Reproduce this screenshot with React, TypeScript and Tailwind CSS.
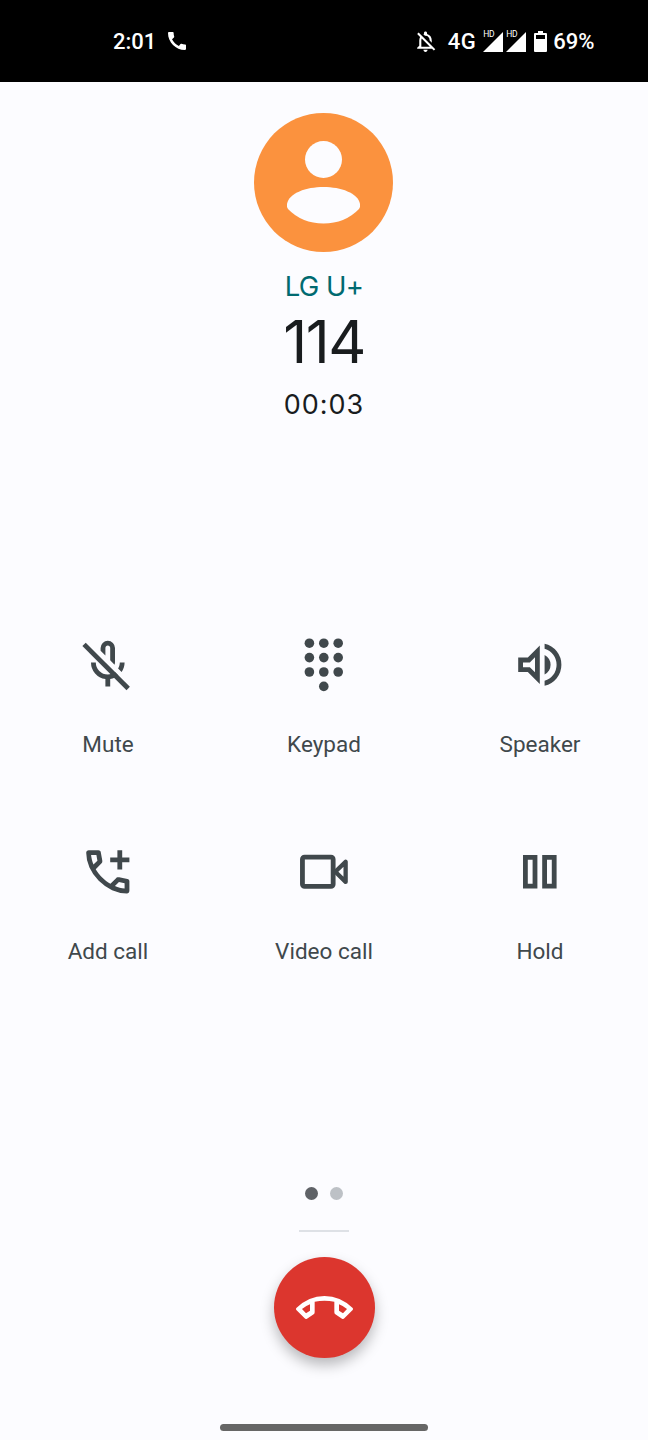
import { ReactNode } from "react"
import { MdCall, MdOutlineNotificationsOff } from "react-icons/md"

interface ActionProps {
    label: string
    children: ReactNode
}

function SignalIcon(){
    return(
        <div className="relative h-[21px] w-[20px]">
            <svg className="h-full w-full" viewBox="0 0 20 21" fill="#fff">
                <path d="M20 1v20H0z" />
            </svg>
            <span className="absolute -top-px left-0 text-[8.5px] font-normal leading-[9px] tracking-[-0.4px]">HD</span>
        </div>
    )
}

function StatusBar(){
    return(
        <header className="flex h-[81.5px] items-center bg-black pl-[113px] pr-[53.5px] pt-px text-[22px] font-medium text-white">
            <span>2:01</span>
            <MdCall size={24} className="ml-[9px]" />
            <div className="ml-auto flex items-center">
                <MdOutlineNotificationsOff size={25} />
                <span className="ml-[10px] mr-[7px] tracking-[0.5px]">4G</span>
                <div className="flex gap-[3px]">
                    <SignalIcon />
                    <SignalIcon />
                </div>
                <svg className="ml-[8px] mr-[6px] h-[21px] w-[13px]" viewBox="0 0 13 21" fill="#fff">
                    <path fillRule="evenodd" d="M4 0h5v2h3a1 1 0 0 1 1 1v17a1 1 0 0 1-1 1H1a1 1 0 0 1-1-1V3a1 1 0 0 1 1-1h3zM2 4v4h9V4z" />
                </svg>
                <span>69%</span>
            </div>
        </header>
    )
}

function Action({ label, children }: ActionProps){
    return(
        <button className="flex flex-col items-center text-[#40484c]">
            <svg className="h-[57.6px] w-[57.6px]" viewBox="0 0 24 24" fill="currentColor">
                {children}
            </svg>
            <span className="mt-[35.4px] text-[22.5px] leading-[30px]">{label}</span>
        </button>
    )
}

export default function App(){
    return(
        <div className="flex h-[1440px] w-[648px] flex-col bg-[#fcfcff] font-['Roboto',sans-serif]">
            <StatusBar />

            <section className="flex h-[553.5px] flex-col items-center pt-[31.5px] font-['Inter',sans-serif] text-[#191c1e]">
                <svg className="mr-px h-[139px] w-[139px]" viewBox="0 0 139 139">
                    <circle cx="69.5" cy="69.5" r="69.5" fill="#fb923e" />
                    <circle cx="69.5" cy="46.5" r="18.5" fill="#fcfcff" />
                    <path d="M33 91C35 80 52 74 69.5 74S104 80 106 91Q106.5 94 105 96Q91 110.5 69.5 110.5T34 96Q32.5 94 33 91Z" fill="#fcfcff" />
                </svg>
                <span className="mt-[17px] text-[27.5px] leading-[34px] tracking-[-0.6px] text-[#006a70]">LG U+</span>
                <h1 className="mt-[3px] text-[59px] leading-[72px] tracking-[-1.5px]">114</h1>
                <span className="mt-[10px] text-[27px] leading-[34px] tracking-[1px]">00:03</span>
            </section>

            <main className="grid grid-cols-3 gap-y-[84px] pt-[0.8px]">
                <Action label="Mute">
                    <path d="m17.75 14.95-1.45-1.45q.35-.575.525-1.213Q17 11.65 17 11h2q0 1.1-.325 2.088-.325.987-.925 1.862Z" />
                    <path d="M14.8 11.95 13 10.15V5q0-.425-.287-.713T12 4t-.713.287T11 5v3.15l-2-2V5q0-1.25.875-2.125T12 2t2.125.875T15 5v6q0 .275-.062.5t-.138.45Z" />
                    <path d="M11 21v-3.1q-2.6-.35-4.3-2.312Q5 13.625 5 11h2q0 2.075 1.463 3.537Q9.925 16 12 16q.85 0 1.613-.262.762-.263 1.387-.738l1.425 1.425q-.725.575-1.587.963-.863.387-1.838.512V21Z" />
                    <path d="M19.8 22.6 1.4 4.2l1.4-1.4 18.4 18.4Z" />
                </Action>
                <Action label="Keypad">
                    {[3, 9, 15].map((y) => [6, 12, 18].map((x) => (
                        <circle key={`${x}-${y}`} cx={x} cy={y} r="2" />
                    )))}
                    <circle cx="12" cy="21" r="2" />
                </Action>
                <Action label="Speaker">
                    <path d="M14 20.725v-2.05q2.25-.65 3.625-2.5t1.375-4.2q0-2.35-1.375-4.2T14 5.275v-2.05q3.1.7 5.05 3.137Q21 8.8 21 11.975q0 3.175-1.95 5.612-1.95 2.438-5.05 3.138ZM14 16V7.95q1.175.55 1.838 1.65.662 1.1.662 2.4 0 1.275-.662 2.363Q15.175 15.45 14 16Z" />
                    <path fillRule="evenodd" d="M3 15V9h4l5-5v16l-5-5ZM10 8.85 7.85 11H5v2h2.85L10 15.15Z" />
                </Action>
                <Action label="Add call">
                    <path fillRule="evenodd" d="M19.95 21q-3.125 0-6.175-1.362-3.05-1.363-5.55-3.863-2.5-2.5-3.862-5.55Q3 7.175 3 4.05q0-.45.3-.75t.75-.3H8.1q.35 0 .625.238.275.237.325.562l.65 3.5q.05.4-.025.675-.075.275-.275.475L6.975 10.9q.5.925 1.187 1.787.688.863 1.513 1.663.775.775 1.625 1.438.85.662 1.8 1.212l2.35-2.35q.225-.225.588-.338.362-.112.712-.062l3.45.7q.35.1.575.363.225.262.225.587v4.05q0 .45-.3.75t-.75.3ZM6.025 9l1.65-1.65L7.25 5H5.025q.125 1.025.35 2.025.225 1 .65 1.975Zm8.95 8.95q.975.425 1.988.675 1.012.25 2.037.325v-2.2l-2.35-.475Z" />
                    <path d="M16 3h2v3h3v2h-3v3h-2V8h-3V6h3z" />
                </Action>
                <Action label="Video call">
                    <rect x="3.1" y="5.9" width="12.8" height="12.2" rx=".9" fill="none" stroke="currentColor" strokeWidth="2" />
                    <path d="M16.8 12 21.1 7.8v8.4z" fill="none" stroke="currentColor" strokeWidth="1.8" strokeLinejoin="round" />
                </Action>
                <Action label="Hold">
                    <path fillRule="evenodd" d="M5 5h6v14H5zm2 2v10h2V7zM13 5h6v14h-6zm2 2v10h2V7z" />
                </Action>
            </main>

            <footer className="flex flex-1 flex-col items-center pb-[9px]">
                <div className="mt-[221.7px] flex gap-3">
                    <span className="h-[13px] w-[13px] rounded-full bg-[#5f6267]" />
                    <span className="h-[13px] w-[13px] rounded-full bg-[#bdc1c6]" />
                </div>
                <div className="mt-[29.8px] h-[2px] w-[50px] bg-[#dee1e6]" />
                <button className="mt-[25.2px] flex h-[101px] w-[101px] items-center justify-center rounded-full bg-[#dc362e] shadow-[0_7px_14px_rgba(0,0,0,0.27)]">
                    <svg className="h-[23px] w-[57px]" viewBox="0 0 171 69" fill="#fff">
                        <path fillRule="evenodd" d="M1 36Q38 0 85.5 0T170 36Q172 39 170 42L145 67Q142 70 138 68L118 55Q115 53 115 49V17Q85.5 11 56 17V49Q56 53 53 55L33 68Q29 70 26 67L1 42Q-1 39 1 36ZM18 39 30 52 42 44V25Q29 30 18 39ZM153 39Q142 30 129 25V44L141 52Z" />
                    </svg>
                </button>
                <div className="mt-auto h-[7px] w-[208px] rounded-full bg-[#666666]" />
            </footer>
        </div>
    )
}
